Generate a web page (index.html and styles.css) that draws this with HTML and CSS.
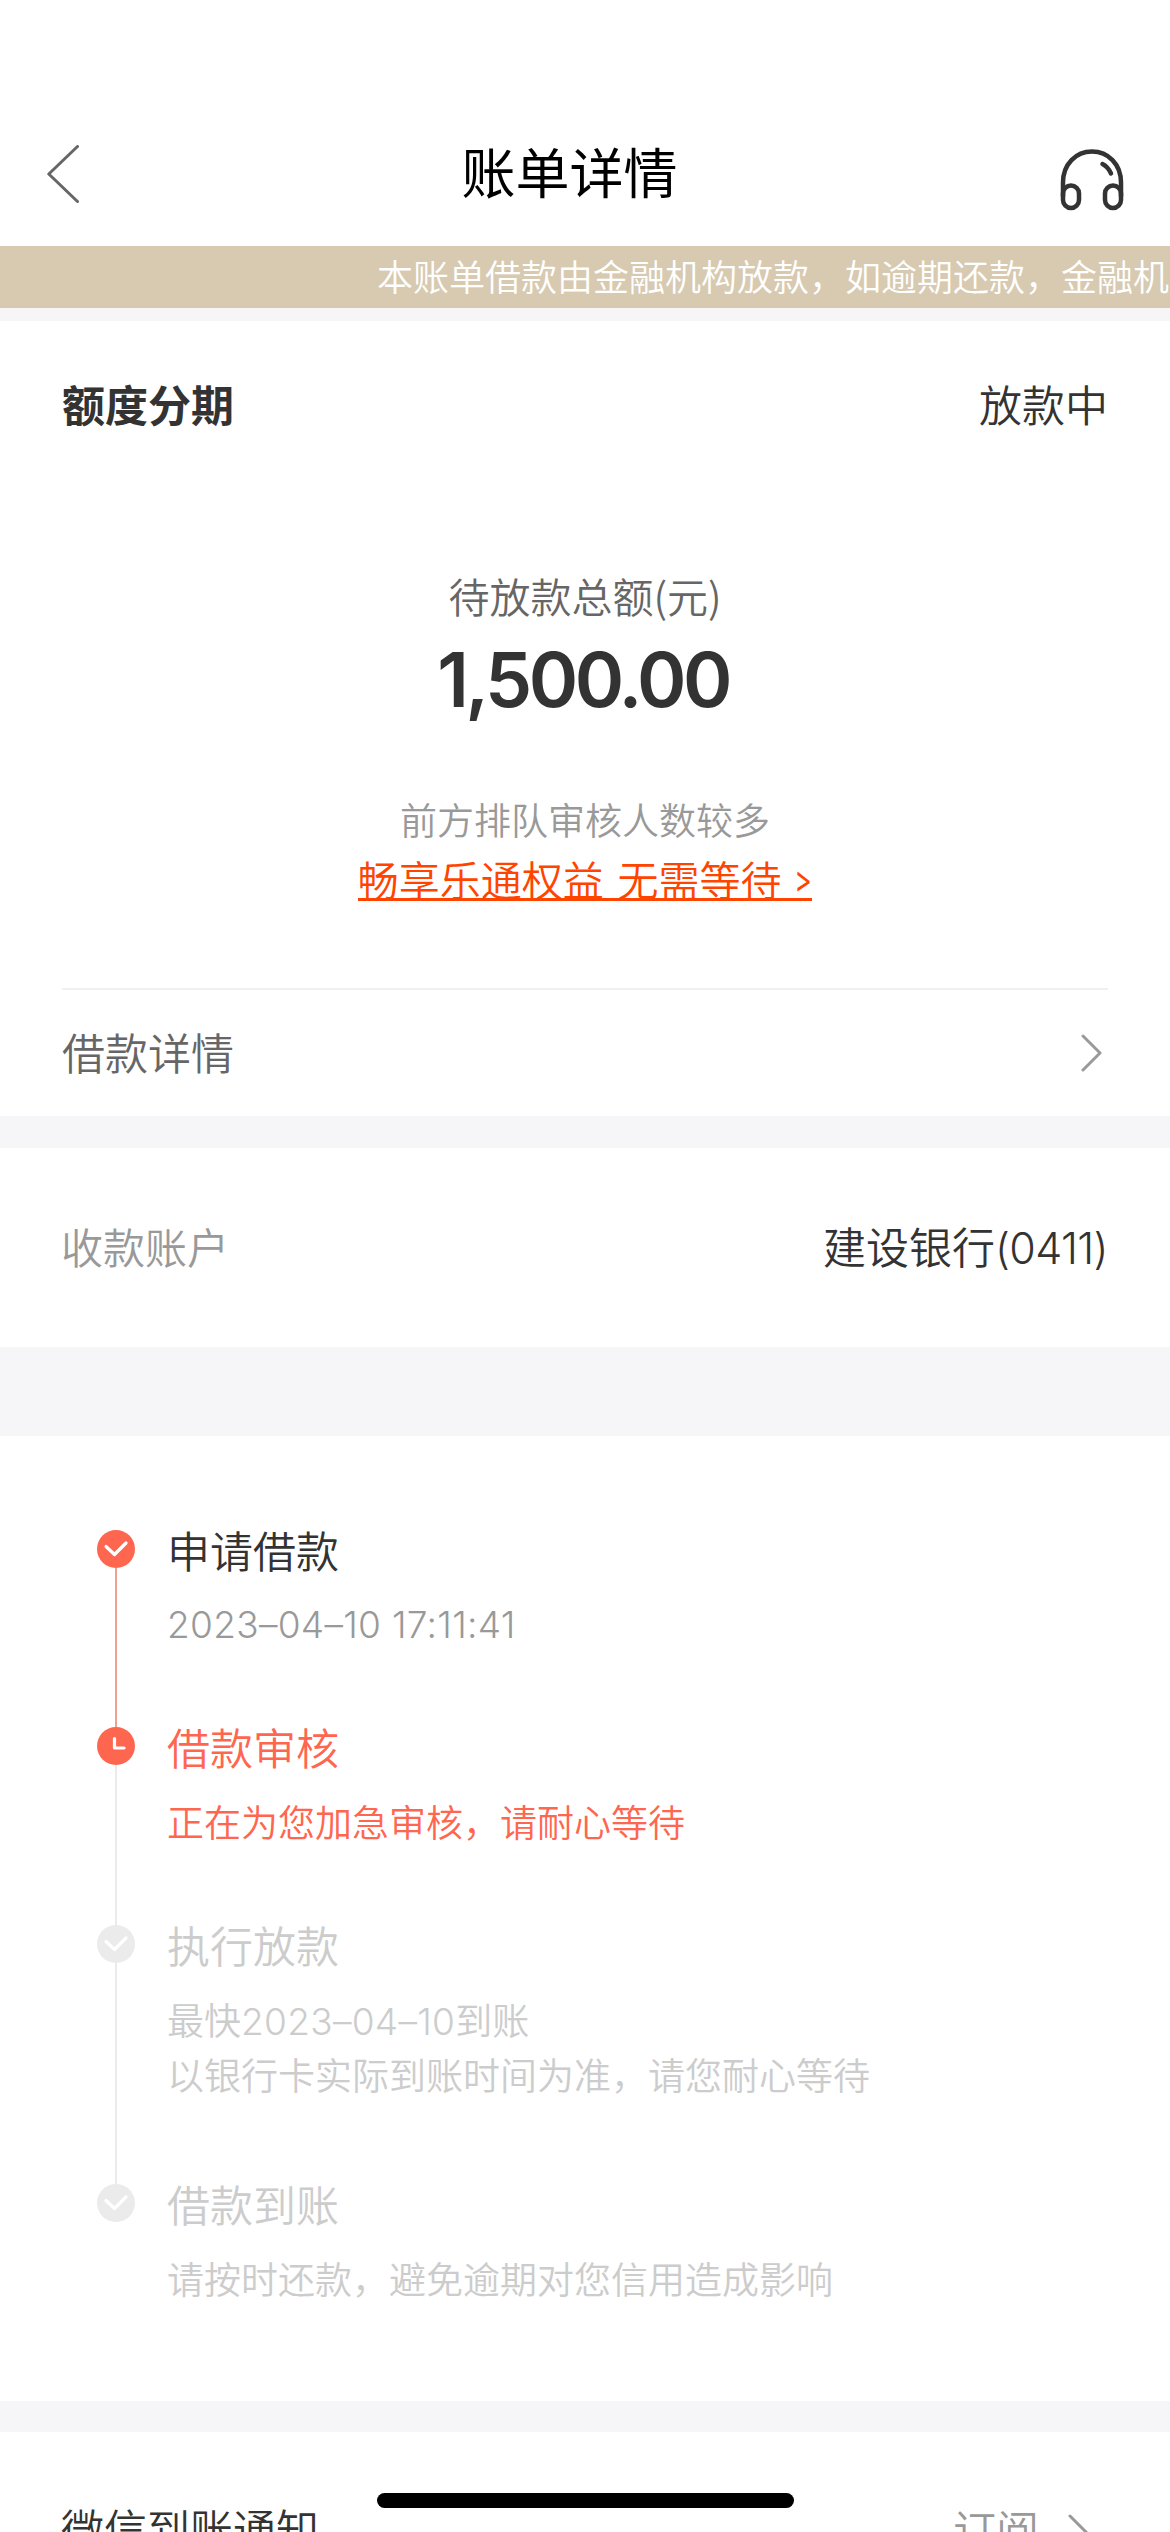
FILE: index.html
```html
<!DOCTYPE html>
<html lang="zh-CN">
<head>
<meta charset="utf-8">
<title>账单详情</title>
<link rel="stylesheet" href="styles.css">
</head>
<body>
<div class="page">
  <header class="navbar">
    <svg class="back" width="32" height="58" viewBox="0 0 32 58"><path d="M30.5 1.5 1.8 29l28.7 27.5"/></svg>
    <h1 class="title">账单详情</h1>
    <svg class="headset" width="64" height="62" viewBox="0 0 64 62">
      <path d="M3 47V33.500C3 15 16 2.500 32 2.500S61 15 61 33.500V47"/>
      <rect x="3" y="36.500" width="16" height="22.500" rx="8"/>
      <rect x="45" y="36.500" width="16" height="22.500" rx="8"/>
      <path d="M42.500 15c4 2 6.500 5 8.500 9.500"/>
    </svg>
  </header>
  <div class="notice">本账单借款由金融机构放款，如逾期还款，金融机构</div>

  <section class="card summary">
    <div class="summary-head">
      <strong>额度分期</strong>
      <span>放款中</span>
    </div>
    <p class="label">待放款总额(元)</p>
    <p class="amount">1,500.00</p>
    <p class="queue">前方排队审核人数较多</p>
    <p class="promo"><a>畅享乐通权益<span class="gap"> </span>无需等待<span class="gap"> </span><span class="arrow">&gt;</span></a></p>
    <div class="row detail">
      <span>借款详情</span>
      <svg class="chevron" width="22" height="38" viewBox="0 0 22 38"><path d="M2 2l17 17L2 36"/></svg>
    </div>
  </section>

  <section class="card row account">
    <span class="muted">收款账户</span>
    <span>建设银行<span class="num">(0411)</span></span>
  </section>

  <section class="card timeline">
    <div class="step done">
      <div class="rail">
        <svg class="dot" width="38" height="38" viewBox="0 0 38 38"><circle cx="19" cy="19" r="19"/><path d="M9 16.500l8.500 8L29 13"/></svg>
        <i class="line"></i>
      </div>
      <div class="text">
        <h2>申请借款</h2>
        <p><span class="num">2023–04–10 17:11:41</span></p>
      </div>
    </div>
    <div class="step active">
      <div class="rail">
        <svg class="dot" width="38" height="38" viewBox="0 0 38 38"><circle cx="19" cy="19" r="19"/><path d="M17.500 11.500V21H27"/></svg>
        <i class="line"></i>
      </div>
      <div class="text">
        <h2>借款审核</h2>
        <p>正在为您加急审核，请耐心等待</p>
      </div>
    </div>
    <div class="step long">
      <div class="rail">
        <svg class="dot" width="38" height="38" viewBox="0 0 38 38"><circle cx="19" cy="19" r="19"/><path d="M9 16.500l8.500 8L29 13"/></svg>
        <i class="line"></i>
      </div>
      <div class="text">
        <h2>执行放款</h2>
        <p>最快<span class="num">2023–04–10</span>到账<br>以银行卡实际到账时间为准，请您耐心等待</p>
      </div>
    </div>
    <div class="step last">
      <div class="rail">
        <svg class="dot" width="38" height="38" viewBox="0 0 38 38"><circle cx="19" cy="19" r="19"/><path d="M9 16.500l8.500 8L29 13"/></svg>
      </div>
      <div class="text">
        <h2>借款到账</h2>
        <p>请按时还款，避免逾期对您信用造成影响</p>
      </div>
    </div>
  </section>

  <section class="card subscribe">
    <span>微信到账通知</span>
    <div class="action">
      <span>订阅</span>
      <svg class="chevron" width="22" height="38" viewBox="0 0 22 38"><path d="M2 2l17 17L2 36"/></svg>
    </div>
  </section>
  <div class="home-indicator"></div>
</div>
</body>
</html>
```
FILE: styles.css
```css
* { box-sizing: border-box; margin: 0; padding: 0; }

body {
  width: 1170px;
  height: 2532px;
  overflow: hidden;
  background: #f6f6f9;
  color: #333;
  font-family: "Noto Sans CJK SC", sans-serif;
  font-size: 43px;
  font-weight: 350;
}

svg { display: block; flex: none; fill: none; stroke-linecap: round; stroke-linejoin: round; }

.page { position: relative; height: 2532px; overflow: hidden; }
.card { background: #fff; }

.navbar {
  display: flex;
  align-items: center;
  justify-content: space-between;
  height: 246px;
  padding: 96px 46px 0 47px;
  background: #fff;
}
.title { font-size: 54px; font-weight: 400; color: #000; line-height: 80px; }
.back { margin-top: 6px; stroke: #666; stroke-width: 3; }
.headset { margin-top: 18px; stroke: #333; stroke-width: 4.5; }

.notice {
  height: 62px;
  margin-bottom: 13px;
  padding-left: 377px;
  background: #d7cab1;
  color: #fff;
  font-size: 36px;
  line-height: 59px;
  white-space: nowrap;
  overflow: hidden;
}

.summary { height: 795px; padding: 37px 62px 0; text-align: center; }
.summary-head {
  display: flex;
  justify-content: space-between;
  line-height: 90px;
}
.summary-head strong { font-weight: 700; }
.label { margin-top: 117px; font-size: 41px; line-height: 60px; color: #666; }
.amount {
  margin-top: 10px;
  padding-right: 4px;
  font-family: Inter, sans-serif;
  font-size: 75px;
  font-weight: 600;
  line-height: 90px;
  letter-spacing: -3.500px;
}
.queue { margin-top: 69px; font-size: 37px; line-height: 50px; color: #999; }
.promo { margin-top: 9px; font-size: 41px; line-height: 50px; color: #ff4400; }
.promo a { border-bottom: 3px solid #ff4400; display: inline-block; height: 48px; }
.gap { letter-spacing: 4.500px; }
.arrow {
  display: inline-block;
  font-family: "Noto Sans", sans-serif;
  font-size: 30px;
  font-weight: 500;
  line-height: 1;
  transform: translateY(-4px) scale(0.85, 1.35);
}

.row { display: flex; align-items: center; justify-content: space-between; }
.row > span { padding-bottom: 5px; }
.chevron { stroke: #999; stroke-width: 3; }
.detail {
  height: 128px;
  margin-top: 85px;
  padding-right: 5px;
  border-top: 2px solid #f0f0f0;
  color: #666;
}

.account { height: 199px; margin-top: 32px; padding: 0 62px 0 61px; }
.muted { color: #999; font-size: 42px; }
.num { font-family: Inter, sans-serif; line-height: 1; letter-spacing: 0.300px; }
.account .num { letter-spacing: -0.600px; }

.timeline { height: 965px; margin-top: 89px; padding: 94px 62px 0 97px; }
.step { display: flex; gap: 32px; height: 197px; color: #ccc; }
.step.active { height: 198px; color: #ff6650; }
.step.long { height: 259px; }
.step h2 { font-size: 43px; font-weight: inherit; line-height: 38px; }
.step p { margin-top: 29px; font-size: 37px; line-height: 55px; }
.step.done h2 { color: #333; }
.step.done p { color: #999; margin-top: 27px; }
.rail { display: flex; flex-direction: column; align-items: center; }
.line { flex: 1; width: 2px; background: #ebebeb; }
.dot { fill: #ebebeb; }
.dot path { fill: none; stroke: #fff; stroke-width: 3.2; }
.done .dot, .active .dot { fill: #ff6650; }
.done .line { background: #f2a092; }

.subscribe {
  display: flex;
  justify-content: space-between;
  height: 100px;
  margin-top: 31px;
  padding: 65px 80px 0 61px;
  line-height: 60px;
}
.action { display: flex; align-items: center; gap: 29px; height: 72px; color: #999; }
.action span { padding-bottom: 10px; }

.home-indicator {
  position: absolute;
  left: 377px;
  top: 2493px;
  width: 417px;
  height: 15px;
  border-radius: 8px;
  background: #000;
}
```
